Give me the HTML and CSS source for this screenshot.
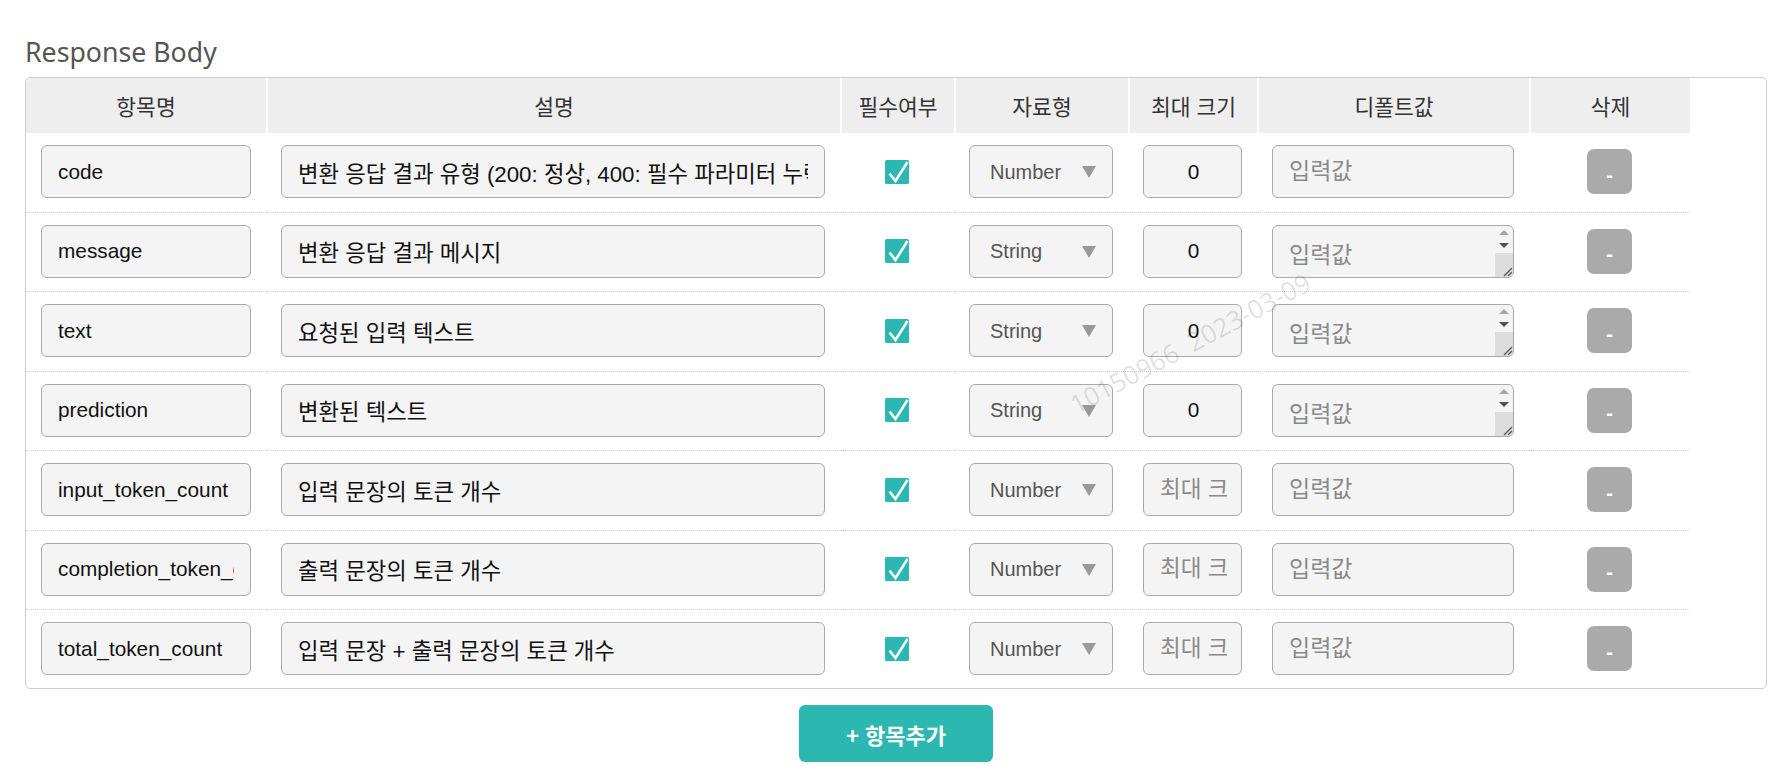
FILE: index.html
```html
<!DOCTYPE html>
<html lang="ko">
<head>
<meta charset="utf-8">
<title>Response Body</title>
<link rel="stylesheet" href="styles.css">
</head>
<body>
<main class="page">
  <h2 class="section-title">Response Body</h2>
  <div class="table-box">
    <table class="resp-table">
      <colgroup>
        <col class="c-name"><col class="c-desc"><col class="c-req"><col class="c-type"><col class="c-max"><col class="c-def"><col class="c-del">
      </colgroup>
      <thead>
        <tr><th>항목명</th><th>설명</th><th>필수여부</th><th>자료형</th><th>최대 크기</th><th>디폴트값</th><th>삭제</th></tr>
      </thead>
      <tbody>
        <tr>
          <td><input class="field" type="text" value="code"></td>
          <td><input class="field desc" type="text" value="변환 응답 결과 유형 (200: 정상, 400: 필수 파라미터 누락)"></td>
          <td><span class="check"><svg viewBox="0 0 24 24" width="24" height="24"><rect width="24" height="24" rx="1.5" fill="#2cb8b2"/><path d="M4.5 13.5 L10.5 21 L22.5 2" fill="none" stroke="#fff" stroke-width="2.6"/></svg></span></td>
          <td><span class="select-wrap"><select class="field sel"><option>Number</option><option>String</option></select></span></td>
          <td><input class="field num" type="text" value="0" placeholder="최대 크기"></td>
          <td><input class="field kr" type="text" placeholder="입력값"></td>
          <td><button class="del-btn" type="button">-</button></td>
        </tr>
        <tr>
          <td><input class="field" type="text" value="message"></td>
          <td><input class="field desc" type="text" value="변환 응답 결과 메시지"></td>
          <td><span class="check"><svg viewBox="0 0 24 24" width="24" height="24"><rect width="24" height="24" rx="1.5" fill="#2cb8b2"/><path d="M4.5 13.5 L10.5 21 L22.5 2" fill="none" stroke="#fff" stroke-width="2.6"/></svg></span></td>
          <td><span class="select-wrap"><select class="field sel"><option>String</option><option>Number</option></select></span></td>
          <td><input class="field num" type="text" value="0" placeholder="최대 크기"></td>
          <td><div class="area-wrap"><textarea class="field kr area" placeholder="입력값"></textarea><span class="sb"><span class="sb-up"></span><span class="sb-down"></span><span class="sb-track"><svg viewBox="0 0 12 12" width="12" height="12"><path d="M11 3 L3 11 M11 7 L7 11" stroke="#555" stroke-width="1.2" fill="none"/></svg></span></span></div></td>
          <td><button class="del-btn" type="button">-</button></td>
        </tr>
        <tr>
          <td><input class="field" type="text" value="text"></td>
          <td><input class="field desc" type="text" value="요청된 입력 텍스트"></td>
          <td><span class="check"><svg viewBox="0 0 24 24" width="24" height="24"><rect width="24" height="24" rx="1.5" fill="#2cb8b2"/><path d="M4.5 13.5 L10.5 21 L22.5 2" fill="none" stroke="#fff" stroke-width="2.6"/></svg></span></td>
          <td><span class="select-wrap"><select class="field sel"><option>String</option><option>Number</option></select></span></td>
          <td><input class="field num" type="text" value="0" placeholder="최대 크기"></td>
          <td><div class="area-wrap"><textarea class="field kr area" placeholder="입력값"></textarea><span class="sb"><span class="sb-up"></span><span class="sb-down"></span><span class="sb-track"><svg viewBox="0 0 12 12" width="12" height="12"><path d="M11 3 L3 11 M11 7 L7 11" stroke="#555" stroke-width="1.2" fill="none"/></svg></span></span></div></td>
          <td><button class="del-btn" type="button">-</button></td>
        </tr>
        <tr>
          <td><input class="field" type="text" value="prediction"></td>
          <td><input class="field desc" type="text" value="변환된 텍스트"></td>
          <td><span class="check"><svg viewBox="0 0 24 24" width="24" height="24"><rect width="24" height="24" rx="1.5" fill="#2cb8b2"/><path d="M4.5 13.5 L10.5 21 L22.5 2" fill="none" stroke="#fff" stroke-width="2.6"/></svg></span></td>
          <td><span class="select-wrap"><select class="field sel"><option>String</option><option>Number</option></select></span></td>
          <td><input class="field num" type="text" value="0" placeholder="최대 크기"></td>
          <td><div class="area-wrap"><textarea class="field kr area" placeholder="입력값"></textarea><span class="sb"><span class="sb-up"></span><span class="sb-down"></span><span class="sb-track"><svg viewBox="0 0 12 12" width="12" height="12"><path d="M11 3 L3 11 M11 7 L7 11" stroke="#555" stroke-width="1.2" fill="none"/></svg></span></span></div></td>
          <td><button class="del-btn" type="button">-</button></td>
        </tr>
        <tr>
          <td><input class="field" type="text" value="input_token_count"></td>
          <td><input class="field desc" type="text" value="입력 문장의 토큰 개수"></td>
          <td><span class="check"><svg viewBox="0 0 24 24" width="24" height="24"><rect width="24" height="24" rx="1.5" fill="#2cb8b2"/><path d="M4.5 13.5 L10.5 21 L22.5 2" fill="none" stroke="#fff" stroke-width="2.6"/></svg></span></td>
          <td><span class="select-wrap"><select class="field sel"><option>Number</option><option>String</option></select></span></td>
          <td><input class="field num" type="text" placeholder="최대 크기"></td>
          <td><input class="field kr" type="text" placeholder="입력값"></td>
          <td><button class="del-btn" type="button">-</button></td>
        </tr>
        <tr>
          <td><input class="field" type="text" value="completion_token_count"></td>
          <td><input class="field desc" type="text" value="출력 문장의 토큰 개수"></td>
          <td><span class="check"><svg viewBox="0 0 24 24" width="24" height="24"><rect width="24" height="24" rx="1.5" fill="#2cb8b2"/><path d="M4.5 13.5 L10.5 21 L22.5 2" fill="none" stroke="#fff" stroke-width="2.6"/></svg></span></td>
          <td><span class="select-wrap"><select class="field sel"><option>Number</option><option>String</option></select></span></td>
          <td><input class="field num" type="text" placeholder="최대 크기"></td>
          <td><input class="field kr" type="text" placeholder="입력값"></td>
          <td><button class="del-btn" type="button">-</button></td>
        </tr>
        <tr>
          <td><input class="field" type="text" value="total_token_count"></td>
          <td><input class="field desc" type="text" value="입력 문장 + 출력 문장의 토큰 개수"></td>
          <td><span class="check"><svg viewBox="0 0 24 24" width="24" height="24"><rect width="24" height="24" rx="1.5" fill="#2cb8b2"/><path d="M4.5 13.5 L10.5 21 L22.5 2" fill="none" stroke="#fff" stroke-width="2.6"/></svg></span></td>
          <td><span class="select-wrap"><select class="field sel"><option>Number</option><option>String</option></select></span></td>
          <td><input class="field num" type="text" placeholder="최대 크기"></td>
          <td><input class="field kr" type="text" placeholder="입력값"></td>
          <td><button class="del-btn" type="button">-</button></td>
        </tr>
      </tbody>
    </table>
  </div>
  <div class="actions"><button class="add-btn" type="button">+ 항목추가</button></div>
  <div class="watermark">10150966&nbsp;&nbsp;2023-03-09</div>
</main>
</body>
</html>
```

FILE: styles.css
```css
* { box-sizing: border-box; }

body {
  margin: 0;
  background: #fff;
  font-family: "Liberation Sans", "Noto Sans CJK KR", Arial, sans-serif;
  color: #222;
}

.page {
  position: relative;
  padding: 0 18px 20px 25px;
}

.section-title {
  margin: 0 0 7px;
  padding-top: 34px;
  font: 400 26.7px/36px "Noto Sans", "Noto Sans CJK KR", sans-serif;
  color: #555;
}

.table-box {
  border: 1px solid #ccc;
  border-radius: 5px;
  overflow: hidden;
}

.resp-table {
  border-collapse: separate;
  border-spacing: 0;
  table-layout: fixed;
  width: 1664px;
}

.c-name { width: 240px; }
.c-desc { width: 574px; }
.c-req  { width: 114px; }
.c-type { width: 174px; }
.c-max  { width: 129px; }
.c-def  { width: 272px; }
.c-del  { width: 161px; }

.resp-table th {
  height: 55px;
  padding: 0;
  background: #eee;
  font: 400 21.5px/1 "Noto Sans CJK KR", sans-serif;
  color: #333;
  text-align: center;
  vertical-align: middle;
}

.resp-table th + th { border-left: 2px solid #fff; }

.resp-table td {
  padding: 12px 15px 13.5px;
  vertical-align: middle;
  text-align: center;
  border-bottom: 1px dotted #d4d4d4;
}

.resp-table tbody tr:last-child td { border-bottom: 0; padding-bottom: 13px; }

.field {
  display: block;
  width: 100%;
  height: 53px;
  margin: 0;
  padding: 0 16px;
  border: 1px solid #aaa;
  border-radius: 6px;
  background: #f4f4f4;
  font: 400 20.8px "Liberation Sans", "Noto Sans CJK KR", sans-serif;
  color: #111;
  outline: none;
}

.field::placeholder { color: #8a8a8a; opacity: 1; }

.field.desc { font-size: 22.3px; }
.field.kr { font-size: 23px; }

.select-wrap {
  position: relative;
  display: block;
}

.select-wrap::after {
  content: "";
  position: absolute;
  right: 17px;
  top: 21px;
  border-left: 7px solid transparent;
  border-right: 7px solid transparent;
  border-top: 12px solid #999;
  pointer-events: none;
}

.field.sel {
  appearance: none;
  -webkit-appearance: none;
  padding-left: 20px;
  font-size: 20px;
  color: #555;
}

.field.num {
  text-align: center;
  font-size: 20.8px;
  padding: 0 14px 0 16px;
}

.field.num:placeholder-shown {
  text-align: left;
  font-size: 22.5px;
}

.check {
  display: inline-flex;
  vertical-align: middle;
}

.area-wrap {
  position: relative;
}

.field.area {
  resize: none;
  overflow: hidden;
  padding: 17px 30px 0 16px;
  line-height: 24px;
}

.sb {
  position: absolute;
  top: 1px;
  right: 1px;
  bottom: 1px;
  width: 18px;
  display: flex;
  flex-direction: column;
  align-items: center;
  border-radius: 0 5px 5px 0;
  overflow: hidden;
}

.sb-up {
  margin-top: 4px;
  border-left: 5px solid transparent;
  border-right: 5px solid transparent;
  border-bottom: 5px solid #a5a5a5;
}

.sb-down {
  margin-top: 8px;
  border-left: 5px solid transparent;
  border-right: 5px solid transparent;
  border-top: 5px solid #505050;
}

.sb-track {
  margin-top: 5px;
  flex: 1;
  align-self: stretch;
  background: #dcdcdc;
  display: flex;
  align-items: flex-end;
  justify-content: flex-end;
}

.del-btn {
  width: 45px;
  height: 45px;
  border: 0;
  border-radius: 7px;
  background: #aaa;
  color: #fff;
  font: 700 20px/1 "Liberation Sans", sans-serif;
  padding: 6px 0 0;
  vertical-align: middle;
}

.actions {
  display: flex;
  justify-content: center;
  margin-top: 16px;
}

.add-btn {
  width: 194px;
  height: 57px;
  border: 0;
  border-radius: 6px;
  background: #2cb7b0;
  color: #fff;
  font: 700 22px/1 "Noto Sans CJK KR", "Liberation Sans", sans-serif;
}

.watermark {
  position: absolute;
  left: 1190px;
  top: 343px;
  transform: translate(-50%, -50%) rotate(-28deg);
  font: 400 26px/1 "Open Sans", sans-serif;
  color: rgba(0, 0, 0, 0.12);
  white-space: nowrap;
  pointer-events: none;
}
```
